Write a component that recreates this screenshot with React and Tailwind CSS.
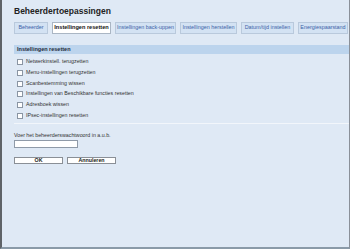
import React from 'react';

const tabs = [
  { label: 'Beheerder', w: 'w-[34px]' },
  { label: 'Instellingen resetten', w: 'w-[59px]', active: true },
  { label: 'Instellingen back-uppen', w: 'w-[61px]' },
  { label: 'Instellingen herstellen', w: 'w-[57px]' },
  { label: 'Datum/tijd instellen', w: 'w-[53px]' },
  { label: 'Energiespaarstand', w: 'w-[50px]' },
];

const options = [
  'Netwerkinstell. terugzetten',
  'Menu-instellingen terugzetten',
  'Scanbestemming wissen',
  'Instellingen van Beschikbare functies resetten',
  'Adresboek wissen',
  'IPsec-instellingen resetten',
];

export default function App() {
  return (
    <div className="w-[350px] h-[249px] overflow-hidden bg-[#dfe9f5] border-l-2 border-r border-b-2 border-l-[#5f6368] border-r-[#8a9099] border-b-[#8a9aa8] font-['Liberation_Sans',Arial,sans-serif] text-[#222]">
      <div className="pl-[12px] pt-[6px]">
        <h1 className="text-[8.5px] font-bold leading-[10px]">Beheerdertoepassingen</h1>

        {/* tabs */}
        <div className="flex gap-[4px] mt-[6px] h-[12px]">
          {tabs.map((t) => (
            <div
              key={t.label}
              className={`${t.w} flex items-center justify-center leading-none border ${
                t.active
                  ? 'bg-white text-[#111] text-[5.6px] font-bold border-[#aab6c4]'
                  : 'bg-[#d3e2f3] text-[#3c62a8] text-[5.4px] border-[#b9c9dc]'
              }`}
            >
              {t.label}
            </div>
          ))}
        </div>

        {/* section header */}
        <div className="mt-[11px] h-[9px] bg-[#bcd4ed] flex items-center pl-[3px] text-[5.5px] font-bold text-[#1d2a3a]">
          Instellingen resetten
        </div>

        <div className="flex flex-col gap-[4.8px] mt-[5px] pl-[3px]">
          {options.map((o) => (
            <label key={o} className="flex items-center gap-[3px] h-[6px] text-[5.3px] text-[#333]">
              <span className="w-[6px] h-[6px] bg-white border border-[#8a95a3] shrink-0" />
              {o}
            </label>
          ))}
        </div>

        <div className="mt-[4px] h-px bg-[#f2f6fb]" />

        <div className="mt-[8px] text-[5.3px] text-[#333] leading-[6px]">Voer het beheerderswachtwoord in a.u.b.</div>
        <div className="mt-[2px] w-[64px] h-[8px] bg-white border border-[#8f9aa8]" />

        <div className="flex gap-[4px] mt-[9px]">
          <button className="w-[49px] h-[7px] bg-white border border-[#8a8f96] text-[5.3px] font-bold leading-none flex items-center justify-center">
            OK
          </button>
          <button className="w-[49px] h-[7px] bg-white border border-[#8a8f96] text-[5.3px] font-bold leading-none flex items-center justify-center">
            Annuleren
          </button>
        </div>
      </div>
    </div>
  );
}
